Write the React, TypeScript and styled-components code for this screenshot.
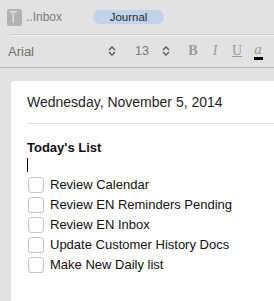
import React from "react";
import styled, { createGlobalStyle } from "styled-components";

const Global = createGlobalStyle`
  html, body { margin: 0; padding: 0; }
  body { background: #e2e2e2; font-family: "Liberation Sans", Arial, sans-serif; }
`;

const Page = styled.div`
  width: 274px;
  height: 301px;
  overflow: hidden;
  background: #e2e2e2;
  display: flex;
  flex-direction: column;
`;

const TopBar = styled.div`
  height: 34px;
  margin-left: 10px;
  display: flex;
  align-items: center;
  border-bottom: 1px solid #cdcdcd;
  box-shadow: 0 1px 0 #efefef;
`;

const NotebookIcon = styled.svg`
  width: 15px;
  height: 17px;
  margin-left: -3px;
  flex: none;
`;

const Crumb = styled.span`
  margin-left: 4px;
  font-size: 12px;
  color: #7b7b7b;
`;

const Pill = styled.span`
  margin-left: 31px;
  width: 71px;
  height: 14px;
  border-radius: 7px;
  background: #c0d3ea;
  color: #2a2a2a;
  font-size: 11.5px;
  display: flex;
  align-items: center;
  justify-content: center;
`;

const FormatBar = styled.div`
  height: 32px;
  display: flex;
  align-items: center;
  padding-left: 8px;
  border-bottom: 1px solid #b9b9b9;
`;

const FontName = styled.span`
  font-size: 13px;
  color: #6f6f6f;
  width: 100px;
`;

const Stepper = styled.svg`
  width: 8px;
  height: 10px;
  flex: none;
`;

const Size = styled.span`
  margin-left: 19px;
  font-size: 12.5px;
  color: #7a7a7a;
  width: 27px;
`;

const StyleBtn = styled.span<{ $italic?: boolean; $under?: boolean; $bold?: boolean }>`
  font-family: "Liberation Serif", "Times New Roman", serif;
  font-size: 14px;
  color: #9a9a9a;
  font-weight: ${(p) => (p.$bold ? 700 : 400)};
  font-style: ${(p) => (p.$italic ? "italic" : "normal")};
  text-decoration: ${(p) => (p.$under ? "underline" : "none")};
  margin-left: ${(p) => (p.$bold ? "18px" : "12px")};
  width: 10px;
  text-align: center;
`;

const ColorBtn = styled.span`
  margin-left: 11px;
  display: flex;
  flex-direction: column;
  align-items: center;
  width: 10px;
`;

const ColorA = styled.span`
  font-family: "Liberation Serif", "Times New Roman", serif;
  font-style: italic;
  font-size: 15px;
  color: #9a9a9a;
  line-height: 13px;
`;

const ColorSwatch = styled.span`
  width: 9px;
  height: 3px;
  background: #000;
  margin-top: 1px;
`;

const Body = styled.div`
  flex: 1;
  display: flex;
  padding-top: 13px;
  padding-left: 11px;
`;

const Card = styled.div`
  flex: 1;
  background: #fff;
  border-top-left-radius: 4px;
  padding-left: 16px;
  padding-top: 11px;
`;

const DateLine = styled.div`
  font-size: 14px;
  color: #1f1f1f;
  height: 31px;
  line-height: 20px;
  border-bottom: 1px solid #dedede;
`;

const Heading = styled.div`
  margin-top: 16px;
  font-size: 13px;
  font-weight: 700;
  color: #111;
  line-height: 16px;
`;

const Cursor = styled.div`
  width: 1px;
  height: 14px;
  background: #000;
  margin-top: 2px;
`;

const List = styled.div`
  margin-top: 5px;
  display: flex;
  flex-direction: column;
  gap: 5px;
`;

const Row = styled.div`
  display: flex;
  align-items: center;
  height: 15px;
`;

const Box = styled.span`
  width: 14px;
  height: 14px;
  border: 1px solid #c4c4c4;
  border-radius: 3px;
  background: #fff;
  margin-left: 1px;
  flex: none;
`;

const Label = styled.span`
  margin-left: 6px;
  font-size: 13px;
  color: #111;
`;

const items = [
  "Review Calendar",
  "Review EN Reminders Pending",
  "Review EN Inbox",
  "Update Customer History Docs",
  "Make New Daily list",
];

const Chevrons = () => (
  <Stepper viewBox="0 0 8 10">
    <path d="M1 4 L4 1 L7 4 M1 6 L4 9 L7 6" fill="none" stroke="#555" strokeWidth="1.3" />
  </Stepper>
);

export default function App() {
  return (
    <Page>
      <Global />
      <TopBar>
        <NotebookIcon viewBox="0 0 15 17">
          <rect x="0" y="0" width="15" height="17" rx="2" fill="#b3b3b3" />
          <rect x="3" y="2" width="7" height="1.5" fill="#dcdcdc" />
          <rect x="5.5" y="2" width="1.5" height="12" fill="#dcdcdc" />
        </NotebookIcon>
        <Crumb>..Inbox</Crumb>
        <Pill>Journal</Pill>
      </TopBar>
      <FormatBar>
        <FontName>Arial</FontName>
        <Chevrons />
        <Size>13</Size>
        <Chevrons />
        <StyleBtn $bold>B</StyleBtn>
        <StyleBtn $italic>I</StyleBtn>
        <StyleBtn $under>U</StyleBtn>
        <ColorBtn>
          <ColorA>a</ColorA>
          <ColorSwatch />
        </ColorBtn>
      </FormatBar>
      <Body>
        <Card>
          <DateLine>Wednesday, November 5, 2014</DateLine>
          <Heading>Today's List</Heading>
          <Cursor />
          <List>
            {items.map((t) => (
              <Row key={t}>
                <Box />
                <Label>{t}</Label>
              </Row>
            ))}
          </List>
        </Card>
      </Body>
    </Page>
  );
}
